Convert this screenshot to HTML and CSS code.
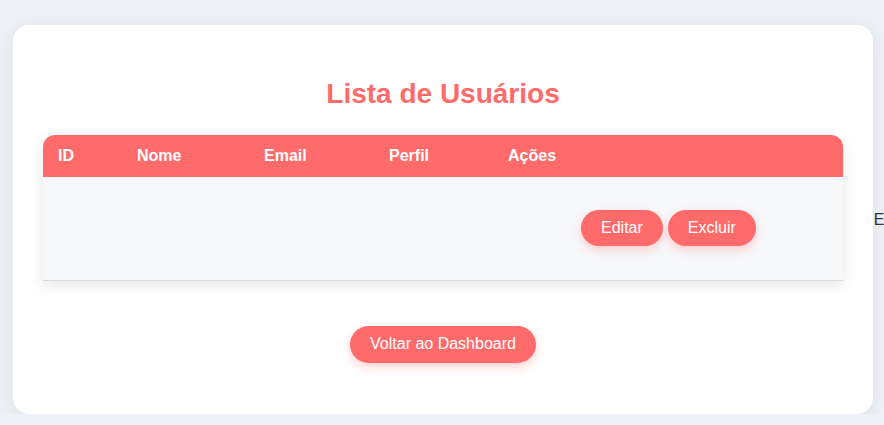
FILE: index.html
```html
<!DOCTYPE html>
<html lang="pt-BR">
<head>
<meta charset="utf-8">
<title>Lista de Usuários</title>
<link rel="stylesheet" href="styles.css">
</head>
<body>
<div class="page">
  <main class="card">
    <h2 class="title">Lista de Usuários</h2>
    <div class="table">
      <div class="thead">
        <span>ID</span>
        <span>Nome</span>
        <span>Email</span>
        <span>Perfil</span>
        <span>Ações</span>
      </div>
      <div class="trow">
        <div class="actions">
          <button class="btn">Editar</button>
          <button class="btn">Excluir</button>
        </div>
        <span class="overflow">E</span>
      </div>
    </div>
    <div class="footer">
      <button class="btn">Voltar ao Dashboard</button>
    </div>
  </main>
</div>
</body>
</html>
```

FILE: styles.css
```css
* { box-sizing: border-box; }
html, body {
  margin: 0;
  padding: 0;
  background: #eef1f6;
  font-family: "Liberation Sans", Arial, sans-serif;
  color: #333;
}
.page {
  padding: 25px 11px 0 13px;
}
.card {
  background: #fff;
  border-radius: 16px;
  padding: 30px 30px 30px;
  box-shadow: 0 4px 20px rgba(0, 0, 0, 0.08);
  height: 389px;
}
.title {
  margin: 23px 0 25px;
  text-align: center;
  color: #ff6b6b;
  font-size: 28px;
  line-height: 32px;
  font-weight: bold;
}
.table {
  box-shadow: 0 4px 14px rgba(0, 0, 0, 0.1);
  border-radius: 12px 12px 0 0;
}
.thead {
  display: grid;
  grid-template-columns: 79px 127px 125px 119px 1fr;
  padding: 12px 15px;
  background: #ff6b6b;
  color: #fff;
  font-weight: bold;
  font-size: 16px;
  line-height: 18px;
  border-radius: 12px 12px 0 0;
}
.trow {
  display: flex;
  align-items: center;
  height: 104px;
  padding-left: 538px;
  background: #f7f8fa;
  border-bottom: 1px solid #dcdcdc;
}
.actions {
  display: flex;
  gap: 5px;
  flex-shrink: 0;
  margin-bottom: 2px;
}
.overflow {
  flex-shrink: 0;
  margin-left: 118px;
  margin-bottom: 18px;
  font-size: 16px;
  line-height: 18px;
  color: #333;
}
.btn {
  font-family: "Liberation Sans", Arial, sans-serif;
  font-size: 16px;
  line-height: 18px;
  padding: 9px 20px;
  border: none;
  border-radius: 20px;
  background: #ff6b6b;
  color: #fff;
  box-shadow: 0 4px 10px rgba(255, 107, 107, 0.3);
  cursor: pointer;
}
.footer {
  display: flex;
  justify-content: center;
  margin-top: 45px;
}
.footer .btn {
  padding: 9px 20px 10px;
}
```
